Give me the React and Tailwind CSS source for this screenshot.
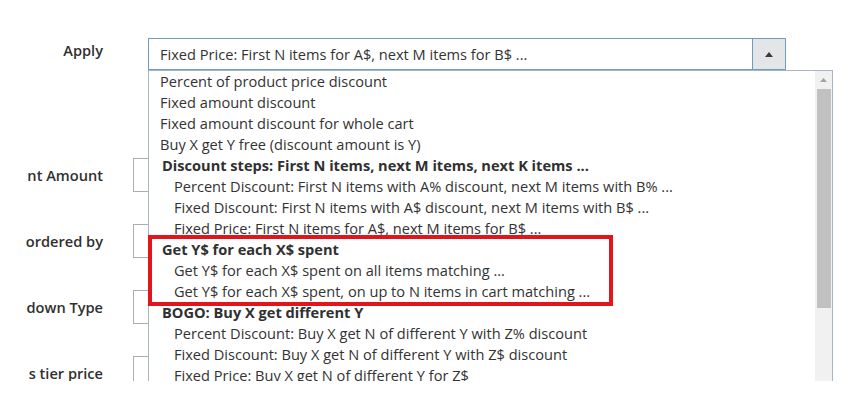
import React from 'react';

const options = [
  { label: 'Percent of product price discount' },
  { label: 'Fixed amount discount' },
  { label: 'Fixed amount discount for whole cart' },
  { label: 'Buy X get Y free (discount amount is Y)' },
  { label: 'Discount steps: First N items, next M items, next K items ...', group: true },
  { label: 'Percent Discount: First N items with A% discount, next M items with B% ...', child: true },
  { label: 'Fixed Discount: First N items with A$ discount, next M items with B$ ...', child: true },
  { label: 'Fixed Price: First N items for A$, next M items for B$ ...', child: true },
  { label: 'Get Y$ for each X$ spent', group: true },
  { label: 'Get Y$ for each X$ spent on all items matching ...', child: true },
  { label: 'Get Y$ for each X$ spent, on up to N items in cart matching ...', child: true },
  { label: 'BOGO: Buy X get different Y', group: true },
  { label: 'Percent Discount: Buy X get N of different Y with Z% discount', child: true },
  { label: 'Fixed Discount: Buy X get N of different Y with Z$ discount', child: true },
  { label: 'Fixed Price: Buy X get N of different Y for Z$', child: true },
];

// labels are cropped at the left edge in the source shot, only the tail is visible
const fields = ['nt Amount', 'ordered by', 'down Type', 's tier price'];

function Label({ children, className = '' }) {
  return (
    <div className={`w-[103px] shrink-0 flex justify-end whitespace-nowrap text-[14.6px] leading-[21px] font-semibold text-[#303030] ${className}`}>
      <span>{children}</span>
    </div>
  );
}

export default function App() {
  return (
    <div className="w-[859px] h-[415px] bg-white font-['Open_Sans',sans-serif]">
      <div className="relative h-[381px] overflow-hidden pt-[38px]">
        {/* Apply row */}
        <div className="flex items-start">
          <Label className="pt-[2px]">Apply</Label>
          <div className="ml-[45px] w-[638px] h-[32px] flex border border-[#6d9cbc] bg-white">
            <div className="flex-1 pl-[11px] text-[14.6px] leading-[30px] text-[#333] whitespace-nowrap overflow-hidden">
              Fixed Price: First N items for A$, next M items for B$ ...
            </div>
            <div className="w-[33px] border-l border-[#6d9cbc] bg-[#e4e5e7] flex items-center justify-center">
              <svg width="8" height="5" viewBox="0 0 8 5"><path d="M4 0 L8 5 L0 5 Z" fill="#3a3a3a" /></svg>
            </div>
          </div>
        </div>

        {/* other fields, behind the dropdown */}
        <div className="mt-[88px] flex flex-col gap-[32px]">
          {fields.map((f) => (
            <div key={f} className="flex items-center h-[34px]">
              <Label>{f}</Label>
              <div className="ml-[30px] w-[300px] h-[34px] border border-[#adadad] bg-white" />
            </div>
          ))}
        </div>

        {/* open dropdown list */}
        <div className="absolute left-[148px] top-[70px] w-[685px] h-[330px] flex bg-white border-l border-t border-r border-[#a9b6c2]">
          <div className="flex-1 text-[14.6px] leading-[21px] text-[#333] whitespace-nowrap overflow-hidden">
            {options.map((o) => (
              <div
                key={o.label}
                className={o.group ? 'pl-[13px] font-bold text-[#303030]' : o.child ? 'pl-[25px]' : 'pl-[11px]'}
              >
                {o.label}
              </div>
            ))}
          </div>
          <div className="w-[17px] bg-[#f1f1f1] flex flex-col items-center">
            <div className="h-[18px] flex items-center justify-center">
              <svg width="7" height="4" viewBox="0 0 7 4"><path d="M3.5 0 L7 4 L0 4 Z" fill="#a3a3a3" /></svg>
            </div>
            <div className="w-[14px] h-[219px] bg-[#c1c1c1]" />
          </div>
        </div>

        {/* highlight */}
        <div className="absolute left-[148px] top-[235px] w-[465px] h-[71px] border-4 border-[#e2141c]" />
      </div>
    </div>
  );
}
